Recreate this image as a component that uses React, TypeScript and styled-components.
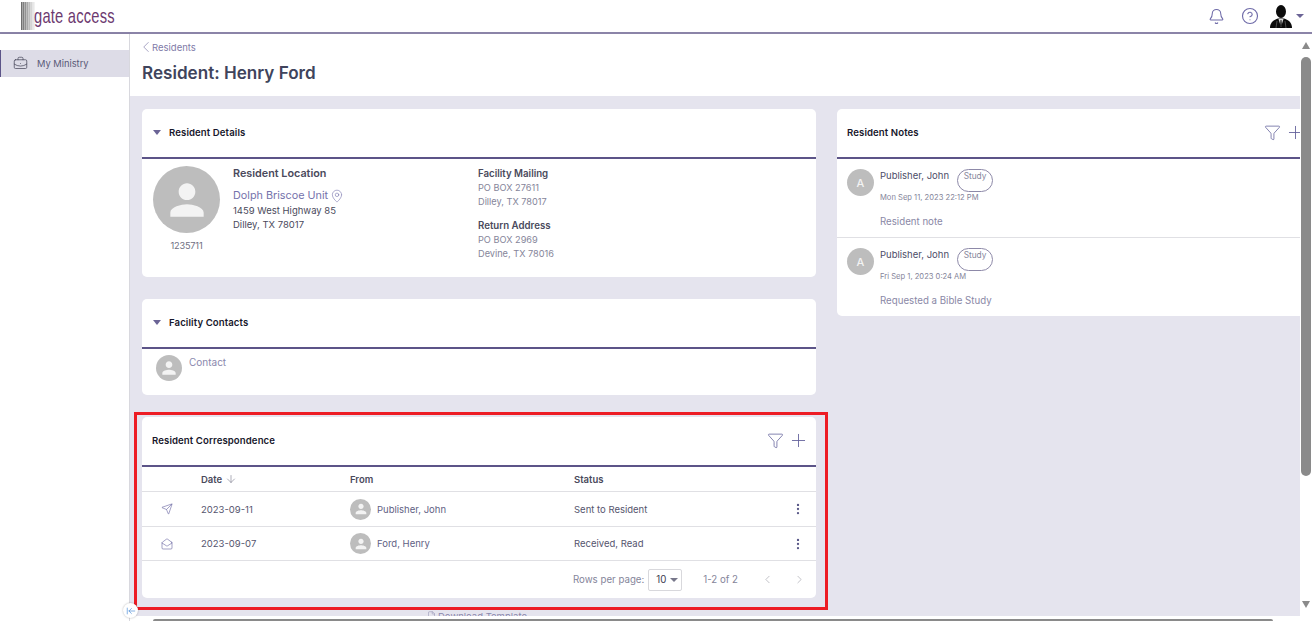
import React from "react";
import styled, { createGlobalStyle } from "styled-components";
import { Bell, CircleHelp, BriefcaseBusiness, ChevronLeft, ChevronRight, File, Filter, Plus, MapPin, ArrowDown, ArrowLeftToLine, Send, MailOpen, EllipsisVertical } from "lucide-react";

const Global = createGlobalStyle`
  html, body { margin: 0; padding: 0; height: 100%; overflow: hidden; background: #fff; }
  body { font-family: Inter, "Noto Sans", sans-serif; color: #4a4a5c; }
  * { box-sizing: border-box; }
`;
const Page = styled.div`
  width: 1312px; height: 621px; display: flex; flex-direction: column; overflow: hidden; position: relative; background: #fff;
`;
const TopBar = styled.header`
  height: 34px; flex: none; display: flex; align-items: center; justify-content: space-between;
  border-bottom: 2px solid #8b84a8; padding: 0 8px 0 21px; background: #fff;
`;
const Logo = styled.div`display: flex; align-items: center; height: 28px;`;
const LogoText = styled.span`
  font-family: "Liberation Sans", sans-serif; font-size: 21px; color: #6d3a70; margin-left: -1px;
  display: inline-block; transform: scaleX(0.7); transform-origin: left center; letter-spacing: 0.3px; white-space: nowrap;
`;
const TopActions = styled.div`display: flex; align-items: center; color: #6e6aa8;`;
const TopIcon = styled.span`display: flex; margin-right: ${p => p.$mr}px;`;
const Caret = styled.span`
  width: 0; height: 0; border-left: 4px solid transparent; border-right: 4px solid transparent;
  border-top: 4px solid ${p => p.$color || "#6b6496"}; display: inline-block; flex: none;
`;
const CardCaret = styled(Caret)`border-top-width: 5px; margin-right: 1px;`;
const Body = styled.div`flex: 1; display: flex; min-height: 0;`;
const Sidebar = styled.nav`
  width: 130px; flex: none; border-right: 1px solid #d8d8de; padding-top: 16px; box-shadow: 1px 0 2px rgba(0,0,0,.08); background: #fff;
`;
const NavItem = styled.div`
  height: 27px; display: flex; align-items: center; gap: 9px; background: #dddce7; border-left: 1px solid #5c5488;
  padding-left: 12px; font-size: 9.3px; color: #5a5a78;
`;
const Main = styled.main`flex: 1; min-width: 0; display: flex; flex-direction: column;`;
const Head = styled.div`height: 62px; flex: none; padding: 6px 0 0 12px; background: #fff;`;
const Crumb = styled.div`display: flex; align-items: center; font-size: 9.5px; color: #7f7ba8; height: 14px;`;
const CrumbChevron = styled(ChevronLeft)`margin: 0 -3px 0 -5px; flex: none;`;
const Title = styled.h1`margin: 9px 0 0; font-size: 17.1px; line-height: 20px; font-weight: 600; color: #40445c;`;
const Content = styled.div`
  flex: 1; background: #e5e4ee; display: grid; grid-template-columns: 674px 475px; column-gap: 21px; padding: 13px 0 0 12px; align-items: start; min-height: 0;
`;
const Column = styled.div`display: flex; flex-direction: column; gap: 22px;`;
const Card = styled.section`
  background: #fff; border-radius: 5px; overflow: hidden; width: 100%;
`;
const CardHead = styled.div`
  height: 50px; display: flex; align-items: center; padding: 0 ${p => p.$pr ?? 11}px 2px ${p => p.$pl ?? 11}px; border-bottom: 2px solid #5c5488; gap: 7px;
`;
const CardTitle = styled.h2`margin: 0; font-size: 9.6px; letter-spacing: 0.1px; font-weight: 600; color: #17172b; flex: 1; white-space: nowrap;`;
const HeadIcons = styled.div`display: flex; align-items: center; gap: 4px; color: #62609a;`;
const Details = styled.div`display: flex; height: 118px; padding: 7px 0 0 11px;`;
const AvatarCol = styled.div`width: 67px; display: flex; flex-direction: column; align-items: center; font-size: 9.2px; color: #6f6f82;`;
const Circle = styled.div`
  width: ${p => p.$s}px; height: ${p => p.$s}px; border-radius: 50%; background: #bdbdbd; flex: none; overflow: hidden;
  display: flex; align-items: center; justify-content: center; color: #f3f3f3; font-size: 11px; font-weight: 500;
`;
const IdText = styled.div`margin-top: 7px; line-height: 12px; letter-spacing: -0.2px;`;
const LocCol = styled.div`width: 245px; margin-left: 13px; padding-top: 1px; font-size: 9.5px; line-height: 14px; color: #4a4a5c;`;
const LocTitle = styled.div`font-size: 10.8px; font-weight: 600; color: #4a4a5c; height: 14px; margin-bottom: 7px;`;
const LocLink = styled.div`display: flex; align-items: center; gap: 2px; color: #7572ac; font-size: 10.8px; height: 15px; margin-bottom: 1px;`;
const MailCol = styled.div`font-size: 9.2px; line-height: 14px; color: #85859a; padding-top: 1px;`;
const MailTitle = styled.div`font-weight: 600; color: #4a4a5c; font-size: 9.7px;`;
const MailBlock = styled.div`margin-bottom: ${p => p.$mb || 0}px;`;
const ContactRow = styled.div`height: 46px; display: flex; padding: 6px 14px; gap: 7px; font-size: 10px; color: #8a88ad;`;
const ContactName = styled.span`padding-top: 1px;`;
const TableGrid = styled.div`display: grid; grid-template-columns: 59px 149px 224px 1fr 36px;`;
const Row = styled(TableGrid)`
  height: ${p => p.$h}px; align-items: center; border-bottom: 1px solid #e0e0e4; font-size: 9.5px; color: #55556e;
`;
const HeadRow = styled(Row)`font-weight: 600; color: #4a4a5c;`;
const IconCell = styled.div`display: flex; justify-content: center; padding-right: 9px; color: #6561a0;`;
const DateHead = styled.div`display: flex; align-items: center; gap: 3px;`;
const Person = styled.div`display: flex; align-items: center; gap: 6px; color: #5f5f84;`;
const Menu = styled.div`display: flex; justify-content: center; color: #5c5b8a;`;
const Pager = styled.div`
  height: 37px; display: flex; align-items: center; justify-content: flex-end; font-size: 9.7px; color: #85859a; padding-right: 10px;
`;
const PageSelect = styled.div`
  width: 34px; height: 22px; margin: 0 21px 0 4px; border: 1px solid #d8d8dc; border-radius: 2px; display: flex; align-items: center; gap: 4px; padding-left: 7px; color: #3a3a4e;
`;
const PageButtons = styled.div`display: flex; gap: 19px; margin-left: 23px; color: #b0b0b8;`;
const Note = styled.div`
  height: ${p => p.$h}px; display: flex; gap: 6px; padding: 10px 10px 0; border-bottom: ${p => p.$line ? "1px solid #e0e0e4" : "none"};
`;
const NoteBody = styled.div`flex: 1;`;
const NoteTop = styled.div`display: flex; align-items: flex-start; gap: 8px; font-size: 9.5px; color: #4d4d68; line-height: 13px;`;
const Chip = styled.span`
  width: 36px; height: 23px; border: 1px solid #8d89a8; border-radius: 12px; font-size: 8.3px; color: #85859a; text-align: center; line-height: 13px;
`;
const NoteDate = styled.div`font-size: 7.6px; color: #85859a; margin-top: 0; line-height: 11px;`;
const NoteText = styled.div`font-size: 9.7px; color: #8a88a6; margin-top: 12px; line-height: 13px;`;
const Corner = styled.div`position: absolute; right: 0; top: 34px; bottom: 0; width: 12px; background: #fff; display: flex; flex-direction: column; align-items: center;`;
const ScrollThumb = styled.div`width: 10px; height: 419px; background: #8a8a8a; border-radius: 5px; margin-top: 8px;`;
const ScrollUp = styled.span`
  width: 0; height: 0; border-left: 4.5px solid transparent; border-right: 4.5px solid transparent; border-bottom: 7px solid #8a8a8a; margin-top: 8px;
`;
const ScrollDown = styled.span`
  position: absolute; bottom: 13px; width: 0; height: 0; border-left: 4.5px solid transparent; border-right: 4.5px solid transparent; border-top: 7px solid #8a8a8a;
`;
const HScroll = styled.div`position: absolute; left: 130px; right: 0; bottom: 0; height: 5px; background: #fff;`;
const HThumb = styled.div`margin: 3px 0 0 23px; width: 1120px; height: 2px; background: #8a8a8a; border-radius: 2px 2px 0 0;`;
const Download = styled.div`
  position: absolute; left: 427px; bottom: 5px; font-size: 9.5px; color: #8a88ad; height: 5px; display: flex; gap: 2px; align-items: flex-start;
  line-height: 12px; overflow: hidden; white-space: nowrap;
`;
const Highlight = styled.div`
  position: absolute; left: 134px; top: 412px; width: 694px; height: 198px; border: 3px solid #ed1c24; pointer-events: none;
`;
const Collapse = styled.div`
  position: absolute; left: 123px; top: 603px; width: 15px; height: 15px; border-radius: 50%; background: #fff; box-shadow: 0 0 2px rgba(0,0,0,.3);
  display: flex; align-items: center; justify-content: center; color: #4a8bd6;
`;

const PersonGlyph = ({ s }: { s: number }) => (
  <svg width={s} height={s} viewBox="0 0 24 24" fill="currentColor">
    <path d="M12 12c2.2 0 4-1.8 4-4s-1.8-4-4-4-4 1.8-4 4 1.8 4 4 4zm0 2c-2.7 0-8 1.3-8 4v2h16v-2c0-2.7-5.3-4-8-4z" />
  </svg>
);

const LogoMark = () => (
  <svg width="14" height="28" viewBox="0 0 14 28">
    <rect x="0" y="0" width="1.6" height="28" fill="#6f6f6f" />
    <rect x="2" y="0" width="1.6" height="28" fill="#808080" />
    <rect x="4" y="0" width="1.6" height="28" fill="#929292" />
    <rect x="6" y="0" width="1.6" height="28" fill="#a8a8a8" />
    <rect x="8" y="0" width="1.6" height="28" fill="#bdbdbd" />
    <rect x="10" y="0" width="1.6" height="28" fill="#d4d4d4" />
    <rect x="12" y="0" width="1.6" height="28" fill="#e8e8e8" />
  </svg>
);

const UserPhoto = () => (
  <svg width="24" height="24" viewBox="0 0 24 24">
    <ellipse cx="12" cy="7.5" rx="5" ry="6.5" fill="#0b0b0b" />
    <path d="M1 24c0-6 4-8 8-9.5h6c4 1.5 8 3.5 8 9.5z" fill="#0b0b0b" />
    <path d="M9.5 15l2.5 8 2.5-8z" fill="#d8d8d8" />
    <path d="M11.5 16h1l.5 6h-2z" fill="#222" />
    <path d="M7 24l1-7M17 24l-1-7" stroke="#777" strokeWidth=".6" fill="none" />
  </svg>
);

const Avatar = ({ s, g }: { s: number; g: number }) => <Circle $s={s}><PersonGlyph s={g} /></Circle>;

const HeaderTools = () => (
  <HeadIcons>
    <Filter size={17} strokeWidth={1.1} />
    <Plus size={21} strokeWidth={1} />
  </HeadIcons>
);

export default function App() {
  return (
    <Page>
      <Global />
      <TopBar>
        <Logo><LogoMark /><LogoText>gate access</LogoText></Logo>
        <TopActions>
          <TopIcon $mr={16}><Bell size={17} strokeWidth={1.5} /></TopIcon>
          <TopIcon $mr={10}><CircleHelp size={18} strokeWidth={1.5} /></TopIcon>
          <TopIcon $mr={3}><UserPhoto /></TopIcon>
          <Caret />
        </TopActions>
      </TopBar>
      <Body>
        <Sidebar>
          <NavItem><BriefcaseBusiness size={15} strokeWidth={1.2} color="#4a4a5c" />My Ministry</NavItem>
        </Sidebar>
        <Main>
          <Head>
            <Crumb><CrumbChevron size={18} strokeWidth={0.9} />Residents</Crumb>
            <Title>Resident: Henry Ford</Title>
          </Head>
          <Content>
            <Column>
              <Card>
                <CardHead><CardCaret /><CardTitle>Resident Details</CardTitle></CardHead>
                <Details>
                  <AvatarCol>
                    <Avatar s={67} g={50} />
                    <IdText>1235711</IdText>
                  </AvatarCol>
                  <LocCol>
                    <LocTitle>Resident Location</LocTitle>
                    <LocLink>Dolph Briscoe Unit<MapPin size={14} strokeWidth={1} /></LocLink>
                    <div>1459 West Highway 85</div>
                    <div>Dilley, TX 78017</div>
                  </LocCol>
                  <MailCol>
                    <MailBlock $mb={10}>
                      <MailTitle>Facility Mailing</MailTitle>
                      <div>PO BOX 27611</div>
                      <div>Dilley, TX 78017</div>
                    </MailBlock>
                    <MailBlock>
                      <MailTitle>Return Address</MailTitle>
                      <div>PO BOX 2969</div>
                      <div>Devine, TX 78016</div>
                    </MailBlock>
                  </MailCol>
                </Details>
              </Card>
              <Card>
                <CardHead><CardCaret /><CardTitle>Facility Contacts</CardTitle></CardHead>
                <ContactRow><Avatar s={26} g={20} /><ContactName>Contact</ContactName></ContactRow>
              </Card>
              <Card>
                <CardHead $pl={10} $pr={7}>
                  <CardTitle>Resident Correspondence</CardTitle>
                  <HeaderTools />
                </CardHead>
                <HeadRow $h={25}>
                  <div />
                  <DateHead>Date<ArrowDown size={12} strokeWidth={1.2} color="#77778a" /></DateHead>
                  <div>From</div>
                  <div>Status</div>
                  <div />
                </HeadRow>
                <Row $h={35}>
                  <IconCell><Send size={12} strokeWidth={1.2} /></IconCell>
                  <div>2023-09-11</div>
                  <Person><Avatar s={21} g={16} />Publisher, John</Person>
                  <div>Sent to Resident</div>
                  <Menu><EllipsisVertical size={14} strokeWidth={2} /></Menu>
                </Row>
                <Row $h={34}>
                  <IconCell><MailOpen size={12} strokeWidth={1.2} /></IconCell>
                  <div>2023-09-07</div>
                  <Person><Avatar s={21} g={16} />Ford, Henry</Person>
                  <div>Received, Read</div>
                  <Menu><EllipsisVertical size={14} strokeWidth={2} /></Menu>
                </Row>
                <Pager>
                  Rows per page:
                  <PageSelect>10<Caret $color="#77778a" /></PageSelect>
                  1-2 of 2
                  <PageButtons><ChevronLeft size={13} strokeWidth={1.4} /><ChevronRight size={13} strokeWidth={1.4} /></PageButtons>
                </Pager>
              </Card>
            </Column>
            <Column>
              <Card>
                <CardHead $pl={10} $pr={6}>
                  <CardTitle>Resident Notes</CardTitle>
                  <HeaderTools />
                </CardHead>
                <Note $h={79} $line>
                  <Circle $s={27}>A</Circle>
                  <NoteBody>
                    <NoteTop>Publisher, John<Chip>Study</Chip></NoteTop>
                    <NoteDate>Mon Sep 11, 2023 22:12 PM</NoteDate>
                    <NoteText>Resident note</NoteText>
                  </NoteBody>
                </Note>
                <Note $h={78}>
                  <Circle $s={27}>A</Circle>
                  <NoteBody>
                    <NoteTop>Publisher, John<Chip>Study</Chip></NoteTop>
                    <NoteDate>Fri Sep 1, 2023 0:24 AM</NoteDate>
                    <NoteText>Requested a Bible Study</NoteText>
                  </NoteBody>
                </Note>
              </Card>
            </Column>
          </Content>
        </Main>
      </Body>
      <Corner><ScrollUp /><ScrollThumb /><ScrollDown /></Corner>
      <Download><File size={9} strokeWidth={1.3} />Download Template</Download>
      <HScroll><HThumb /></HScroll>
      <Highlight />
      <Collapse><ArrowLeftToLine size={10} strokeWidth={1.6} /></Collapse>
    </Page>
  );
}
